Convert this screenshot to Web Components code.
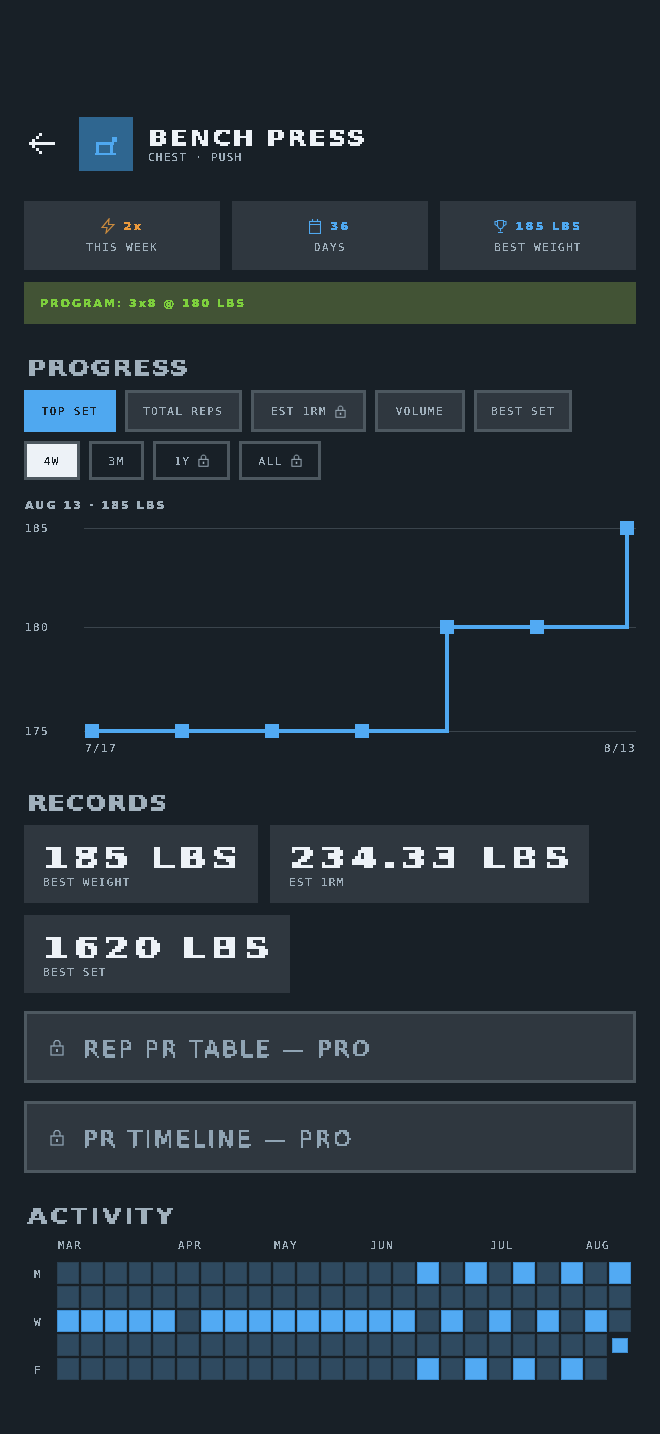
<!doctype html>
<html lang="en"><head><meta charset="utf-8"><title>Bench Press</title>
<style>
html,body{margin:0;background:#182027;}
body{width:660px;height:1434px;overflow:hidden;font-family:"DejaVu Sans Mono",monospace;color:#a0b0bc;}
</style></head><body>
<fit-page></fit-page>
<script>
const FILTERS=`<svg width="0" height="0" style="position:absolute" aria-hidden="true"><defs>
<filter id="lo" x="-0.1" y="-0.2" width="1.2" height="1.4" color-interpolation-filters="sRGB">
<feComponentTransfer><feFuncA type="discrete" tableValues="0 0 1 1 1"/></feComponentTransfer></filter>
<filter id="hv" x="-0.1" y="-0.2" width="1.2" height="1.4" color-interpolation-filters="sRGB">
<feComponentTransfer><feFuncA type="discrete" tableValues="0 1 1 1 1"/></feComponentTransfer></filter>
<filter id="hi" x="-0.1" y="-0.2" width="1.7" height="1.4" color-interpolation-filters="sRGB">
<feFlood x="0" y="0" width="1" height="1" flood-color="#000"/><feComposite width="2" height="2"/><feTile result="g"/>
<feComposite in="SourceGraphic" in2="g" operator="in" result="d"/>
<feOffset in="d" dx="1" result="d1"/><feMerge result="r"><feMergeNode in="d"/><feMergeNode in="d1"/></feMerge>
<feOffset in="r" dy="1" result="r1"/><feMerge result="m"><feMergeNode in="r"/><feMergeNode in="r1"/></feMerge>
<feComponentTransfer in="m"><feFuncA type="discrete" tableValues="0 1 1 1"/></feComponentTransfer></filter>
<filter id="hi3" x="-0.1" y="-0.2" width="1.7" height="1.4" color-interpolation-filters="sRGB">
<feFlood x="1" y="1" width="1" height="1" flood-color="#000"/><feComposite width="3" height="3"/><feTile result="g"/>
<feComposite in="SourceGraphic" in2="g" operator="in" result="d"/>
<feMorphology in="d" operator="dilate" radius="1" result="m"/>
<feComponentTransfer in="m"><feFuncA type="discrete" tableValues="0 1 1 1"/></feComponentTransfer></filter>
</defs></svg>`;
function def(name,css,html){
  customElements.define(name,class extends HTMLElement{
    constructor(){super();const r=this.attachShadow({mode:"open"});
      r.innerHTML=`<style>${css}</style>${typeof html==="function"?html(this):html}`;
    }
  });
}
def("px-t",`:host{display:inline-block;white-space:nowrap}span{display:inline-block}
span.in{transform-origin:0 50%}
span.lo{filter:url(#lo)}span.hv{filter:url(#hv)}span.hi{filter:url(#hi)}span.hi3{filter:url(#hi3)}`,
  el=>`${FILTERS}<span class="${el.getAttribute('v')||'lo'}"><span class="in" style="transform:scaleX(${el.getAttribute('sx')||1})"><slot></slot></span></span>`);

const lockSvg=(w,h,c)=>`<svg width="${w}" height="${h}" viewBox="0 0 14 17" fill="none" stroke="${c}" stroke-width="1.25"><rect x="1" y="7" width="12" height="9"/><path d="M4 7V3.5L5.5 1.5h3L10 3.5V7"/><path d="M7 10v3" stroke-width="2"/></svg>`;

def("fit-header",`:host{display:flex;align-items:center;padding-left:5px;height:54px}
.back{display:flex;margin-right:24px}
.ic{width:54px;height:54px;background:#2f6690;display:flex;flex:none;margin-right:15px}
.tx{display:flex;flex-direction:column;padding-top:1px}
.t{font:700 22px/23px "DejaVu Sans",sans-serif;letter-spacing:1.7px;color:#edf2f7;height:24px}
.s{font:400 11px/12px "DejaVu Sans Mono",monospace;letter-spacing:1.25px;color:#a0b0bc;margin-top:2px}`,
`<div class="back"><svg width="26" height="22" viewBox="0 0 26 22" fill="#edf2f7" shape-rendering="crispEdges"><rect x="2" y="9" width="24" height="3"/><rect x="0" y="9" width="3" height="3"/><rect x="3" y="6" width="3" height="3"/><rect x="3" y="12" width="3" height="3"/><rect x="7" y="3" width="3" height="3"/><rect x="7" y="15" width="3" height="3"/><rect x="10" y="0" width="3" height="3"/><rect x="10" y="18" width="3" height="3"/></svg></div>
<div class="ic"><svg width="54" height="54" viewBox="0 0 54 54" fill="#4fa8f0" shape-rendering="crispEdges"><rect x="17" y="25" width="18" height="3"/><rect x="17" y="25" width="3" height="12"/><rect x="31" y="25" width="3" height="12"/><rect x="16" y="36" width="21" height="2"/><rect x="33" y="20" width="5" height="5"/></svg></div>
<div class="tx"><div class="t"><px-t v="hi" sx="1.15">BENCH PRESS</px-t></div><div class="s"><px-t>CHEST · PUSH</px-t></div></div>`);

def("stat-card",`:host{display:flex;flex-direction:column;align-items:center;flex:1;background:#2f373f;height:69px;padding-top:16px;box-sizing:border-box}
.v{display:flex;align-items:center;gap:9px;height:18px;font:700 11px/18px "DejaVu Sans",sans-serif;letter-spacing:2.4px;color:var(--c)}
.v px-t{margin-top:2px}
.l{font:400 11px/14px "DejaVu Sans Mono",monospace;letter-spacing:1.35px;color:#a0b0bc;margin-top:6px}
svg{display:block}`,
el=>`<div class="v"><slot name="i"></slot><px-t v="hv">${el.getAttribute('val')}</px-t></div><div class="l"><px-t>${el.getAttribute('lab')}</px-t></div>`);

def("fit-tab",`:host{display:flex;align-items:center;justify-content:center;gap:8px;box-sizing:border-box;border:3px solid #4d5860;background:#2f373f;color:#a0b0bc;font:400 11px/14px "DejaVu Sans Mono",monospace;letter-spacing:1.4px;padding-top:2px}
:host([on]){background:#4fa8f0;border-color:#4fa8f0;color:#182027}
:host([dark]){background:#182027}
:host([w]){background:#edf2f7;color:#182027}
svg{margin-top:-2px}`,
el=>`<px-t><slot></slot></px-t>${el.hasAttribute('lock')?lockSvg(11,13,'#a0b0bc'):''}`);

def("sec-title",`:host{display:block;height:24px;font:700 22px/24px "DejaVu Sans",sans-serif;letter-spacing:1.4px;color:#a0b0bc;padding-left:3px}`,`<px-t v="hi" sx="1.15"><slot></slot></px-t>`);

def("rec-card",`:host{display:block;box-sizing:border-box;height:78px;background:#2f373f;padding:16px 0 0 19px}
.v{font:700 32px/34px "DejaVu Sans",sans-serif;color:#edf2f7;letter-spacing:var(--ls,3.5px);height:35px}
.l{font:400 11px/14px "DejaVu Sans Mono",monospace;letter-spacing:1.35px;color:#a0b0bc;margin-top:0}`,
el=>`<div class="v"><px-t v="hi3" sx="1.17">${el.getAttribute('val')}</px-t></div><div class="l"><px-t>${el.getAttribute('lab')}</px-t></div>`);

def("pro-lock",`:host{display:flex;align-items:center;box-sizing:border-box;height:72px;background:#2f373f;border:3px solid #4d5860;padding-left:23px;gap:19px;color:#90a4b4;font:400 22px/26px "DejaVu Sans",sans-serif;letter-spacing:3px}
px-t{margin-top:4px;-webkit-text-stroke:.5px currentColor}`,
`${lockSvg(14,17,'#90a4b4')}<px-t v="hi"><slot></slot></px-t>`);

def("fit-chart",`:host{display:block;height:250px}svg{display:block;overflow:visible}
text{font:400 11px "DejaVu Sans Mono",monospace;letter-spacing:1.4px;fill:#a0b0bc;filter:url(#lo)}`,
()=>{
  const pts=[[68,216],[158,216],[248,216],[338,216],[423,112],[513,112],[603,13]];
  return `${FILTERS}<svg width="612" height="250" viewBox="0 0 612 250">
  ${[13,112,216].map(y=>`<rect x="60" y="${y}" width="552" height="1" fill="#3a444c"/>`).join('')}
  <text x="1" y="17">185</text><text x="1" y="116">180</text><text x="1" y="220">175</text>
  <text x="61" y="237">7/17</text><text x="612" y="237" text-anchor="end">8/13</text>
  <path d="M68 216H423V112H603V13" fill="none" stroke="#4fa8f0" stroke-width="4"/>
  ${pts.map(p=>`<rect x="${p[0]-7}" y="${p[1]-7}" width="14" height="14" fill="#52aaf3"/>`).join('')}
  </svg>`;
});

def("fit-heat",`:host{display:grid;grid-template-columns:31px repeat(24,22px);grid-template-rows:20px repeat(5,22px);gap:2px;font:400 11px/14px "DejaVu Sans Mono",monospace;letter-spacing:1.4px;color:#a0b0bc}
.mh{display:block;white-space:nowrap;padding-left:1px;grid-row:1;width:0;height:14px;align-self:start;margin-top:-1px}
.d{display:flex;align-items:center;justify-content:flex-end;padding-right:13px;grid-column:1;padding-top:3px}
.c{background:#2f4a60;box-sizing:border-box;border:1px solid #2a4153}
.c.a{background:#52aaf3;border-color:#3f8fd3}
.c.n{margin:4px 3px 3px 3px;background:#52aaf3;border:1px solid #3f8fd3}`,
()=>{
  const months=[["MAR",0],["APR",5],["MAY",9],["JUN",13],["JUL",18],["AUG",22]];
  let h="";
  for(const [m,c] of months)h+=`<div class="mh" style="grid-column:${c+2}"><px-t>${m}</px-t></div>`;
  const labs=["M","","W","","F"];
  const on=(r,c)=>{
    if(r===0)return [15,17,19,21,23].includes(c);
    if(r===2)return (c<=14&&c!==5)||[16,18,20,22].includes(c);
    if(r===4)return [15,17,19,21].includes(c);
    return false;
  };
  for(let r=0;r<5;r++){
    h+=`<div class="d" style="grid-row:${r+2}"><px-t>${labs[r]}</px-t></div>`;
    for(let c=0;c<24;c++){
      if(r===4&&c===23)continue;
      const pos=`grid-row:${r+2};grid-column:${c+2}`;
      if(r===3&&c===23){h+=`<div class="c n" style="${pos}"></div>`;continue;}
      h+=`<div class="c${on(r,c)?' a':''}" style="${pos}"></div>`;
    }
  }
  return h;
});

def("fit-page",`:host{display:block;box-sizing:border-box;width:660px;height:1434px;padding:117px 24px 0}
.stats{display:flex;gap:12px;margin-top:30px}
.prog{display:flex;align-items:center;height:42px;margin-top:12px;background:#425335;padding:2px 0 0 16px;box-sizing:border-box;font:700 11px/14px "DejaVu Sans",sans-serif;letter-spacing:2px;color:#7ed03d}
sec-title.s1{margin-top:32px;height:23px}
.tabs{display:flex;gap:9px}
.t1{margin-top:11px;height:42px}.t2{margin-top:9px;height:39px}
.read{height:14px;margin-top:19px;font:700 11px/14px "DejaVu Sans",sans-serif;letter-spacing:2.15px;color:#a0b0bc;padding-left:1px}
fit-chart{margin-top:2px}
sec-title.s2{margin-top:26px}
.recs{display:flex;flex-wrap:wrap;gap:12px;margin-top:10px}
pro-lock{margin-top:18px}
sec-title.s3{margin-top:31px}
fit-heat{margin-top:12px}
svg{display:block}`,
`<fit-header></fit-header>
<div class="stats">
<stat-card val="2x" lab="THIS WEEK" style="--c:#ec9a3c"><svg slot="i" width="14" height="16" viewBox="0 0 14 16" fill="none" stroke="#c98a3e" stroke-width="1.2"><path d="M8 1 1 9.5h5L5 15l8-8.5H7.5z"/></svg></stat-card>
<stat-card val="36" lab="DAYS" style="--c:#4fa8f0"><svg slot="i" width="12" height="15" viewBox="0 0 12 15" fill="none" stroke="#4fa8f0" stroke-width="1.1"><rect x=".5" y="2.5" width="11" height="12"/><path d="M.5 5.5h11M3.5 0v3M8.500 0v3"/></svg></stat-card>
<stat-card val="185 LBS" lab="BEST WEIGHT" style="--c:#4fa8f0"><svg slot="i" width="13" height="15" viewBox="0 0 13 15" fill="none" stroke="#4fa8f0" stroke-width="1.1"><path d="M3.5 1.5h6v5.5l-1.5 2.5h-3L3.5 7z"/><path d="M3.5 2.5h-2.500v3l2.500 1.500M9.500 2.500h2.500v3l-2.500 1.500M6.500 9.500v3M4 13.500h5"/></svg></stat-card>
</div>
<div class="prog"><px-t v="hv">PROGRAM: 3x8 @ 180 LBS</px-t></div>
<sec-title class="s1" style="letter-spacing:1px">PROGRESS</sec-title>
<div class="tabs t1">
<fit-tab on style="width:91.7px">TOP SET</fit-tab><fit-tab style="width:117px">TOTAL REPS</fit-tab><fit-tab lock style="width:115.3px">EST 1RM</fit-tab><fit-tab style="width:89.7px">VOLUME</fit-tab><fit-tab style="width:98.7px">BEST SET</fit-tab>
</div>
<div class="tabs t2">
<fit-tab w style="width:55.7px">4W</fit-tab><fit-tab dark style="width:55.7px">3M</fit-tab><fit-tab dark lock style="width:76.7px">1Y</fit-tab><fit-tab dark lock style="width:82px">ALL</fit-tab>
</div>
<div class="read"><px-t v="hv">AUG 13 · 185 LBS</px-t></div>
<fit-chart></fit-chart>
<sec-title class="s2" style="letter-spacing:.6px">RECORDS</sec-title>
<div class="recs">
<rec-card val="185 LBS" lab="BEST WEIGHT" style="width:234px"></rec-card>
<rec-card val="234.33 LBS" lab="EST 1RM" style="width:319px;--ls:4.2px"></rec-card>
<rec-card val="1620 LBS" lab="BEST SET" style="width:266px;--ls:3.7px"></rec-card>
</div>
<pro-lock>REP PR TABLE — PRO</pro-lock>
<pro-lock>PR TIMELINE — PRO</pro-lock>
<sec-title class="s3" style="letter-spacing:2.1px">ACTIVITY</sec-title>
<fit-heat></fit-heat>`);
</script>
</body></html>
